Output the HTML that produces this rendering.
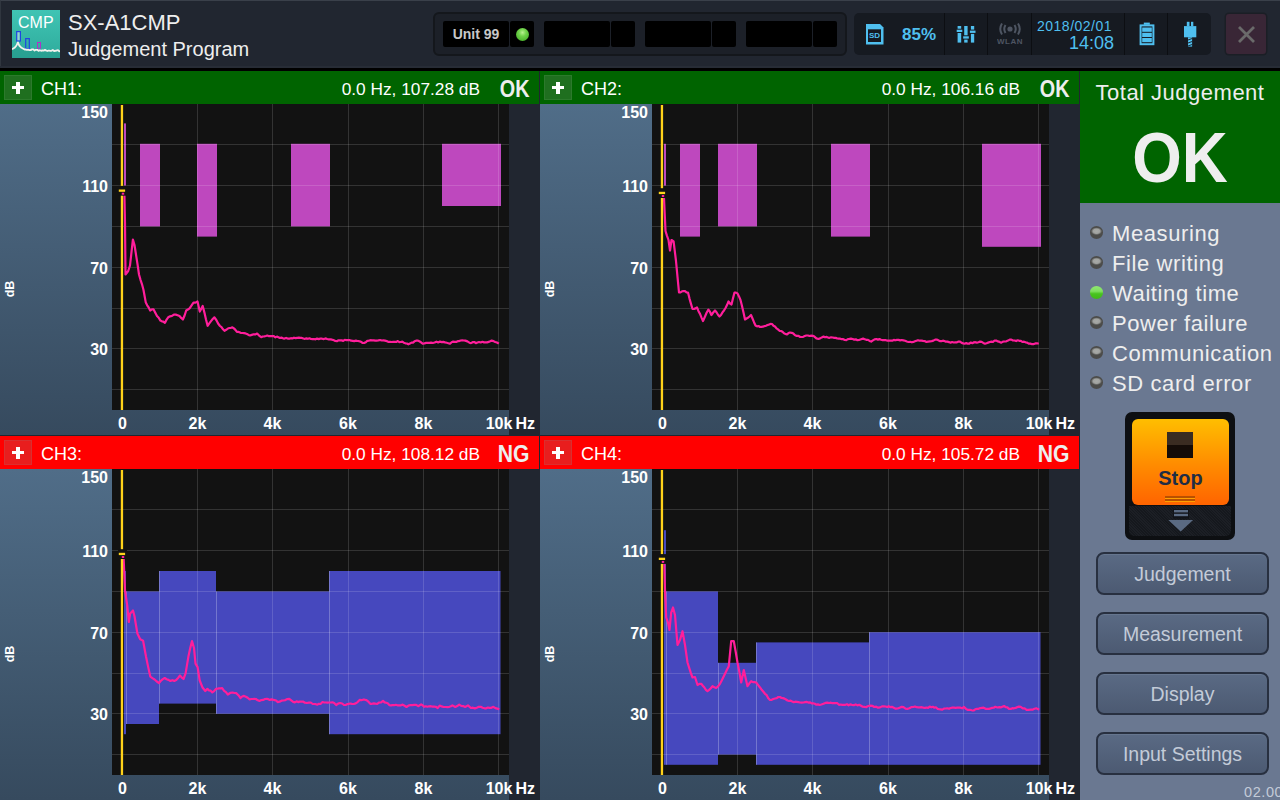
<!DOCTYPE html><html><head><meta charset="utf-8"><style>*{box-sizing:border-box;margin:0;padding:0}
html,body{width:1280px;height:800px;overflow:hidden}
body{background:#212630;position:relative;font-family:"Liberation Sans",sans-serif;color:#fff}
.abs{position:absolute}
#hdr{position:absolute;left:0;top:0;width:1280px;height:68px;background:#212630;border-top:1px solid #3a404a;border-left:1px solid #30363f}
#blk{position:absolute;left:0;top:68px;width:1280px;height:3px;background:#000}
#logo{position:absolute;left:12px;top:10px;width:48px;height:48px;background:linear-gradient(#40c4b4,#2eab9c);overflow:hidden}
#logo .t{position:absolute;left:6px;top:4px;font-size:16px;color:#fff;letter-spacing:0px}
#title1{position:absolute;left:68px;top:10px;font-size:22px;color:#eeeeee;white-space:nowrap}
#title2{position:absolute;left:68px;top:38px;font-size:20px;color:#eeeeee;white-space:nowrap}
.grp{position:absolute;top:12px;height:44px;background:#1c2028;border:2px solid #14171c;border-radius:6px}
.cell{position:absolute;top:21px;height:26px;background:#000;border-radius:2px}
#unit{font-weight:bold;font-size:14px;color:#c8c8c8;text-align:center;line-height:26px}
#led{position:absolute;left:516px;top:28px;width:13px;height:13px;border-radius:50%;background:radial-gradient(circle at 50% 35%,#b8f090 0%,#6fd24a 35%,#3ba51f 100%)}
.stat{position:absolute;top:13px;height:42px;background:#161a21;border-radius:5px}
.sep{position:absolute;top:13px;width:1px;height:42px;background:#0c0e12}
.blue{color:#4fbfef}
.panel{position:absolute;width:540px;height:365px;overflow:hidden}
.panel svg.plot{position:absolute;left:0;top:0}
.hline{position:absolute;left:0;top:364px;width:540px;height:1px;background:#212630}
.axisbg{position:absolute;left:0;top:33px;width:509px;height:331px;background:linear-gradient(#506d88,#364a5e)}
.rdark{position:absolute;left:509px;top:33px;width:30px;height:332px;background:#212630}
.vdiv{position:absolute;left:539px;top:0;width:1px;height:365px;background:#212630}
.hdr{position:absolute;left:0;top:0;width:539px;height:33px}
.plus{position:absolute;left:4px;top:4px;width:28px;height:25px;border:1px solid}
.plus:before{content:'';position:absolute;left:7px;top:9.5px;width:12px;height:3.2px;background:#fff}
.plus:after{content:'';position:absolute;left:11.4px;top:6.2px;width:3.2px;height:12px;background:#fff}
.chn{position:absolute;left:41px;top:8px;font-size:18px;color:#fff}
.val{position:absolute;right:59px;top:8px;font-size:17.3px;color:#fff;white-space:nowrap}
.res{position:absolute;right:10px;top:4.5px;font-size:23px;font-weight:bold;color:#eeeeee;transform:scaleX(0.86);transform-origin:100% 50%}
.yl{position:absolute;left:50px;width:58px;text-align:right;font-size:16px;font-weight:bold;color:#fff}
.db{position:absolute;left:0px;top:211px;width:20px;font-size:12.5px;line-height:14px;text-align:center;font-weight:bold;color:#fff;transform:rotate(-90deg)}
.xl{position:absolute;top:344px;width:60px;text-align:center;font-size:16px;font-weight:bold;color:#fff}
.hz{position:absolute;left:515.5px;top:344px;font-size:16px;font-weight:bold;color:#fff}
#rp{position:absolute;left:1080px;top:71px;width:200px;height:729px;background:#6a7891}
#rpline{position:absolute;left:1079px;top:71px;width:1px;height:729px;background:#212630}
#tj{position:absolute;left:1080px;top:71px;width:200px;height:132px;background:#006400}
#tj .a{position:absolute;left:0;width:200px;top:9px;text-align:center;font-size:22px;letter-spacing:0.5px;color:#eeeeee}
#tj .b{position:absolute;left:0;width:200px;top:47px;text-align:center;font-size:70px;font-weight:bold;color:#eeeeee;transform:scaleX(0.91)}
.st{position:absolute;left:1112px;font-size:22px;letter-spacing:0.6px;color:#eeeeee;white-space:nowrap}
.sled{position:absolute;left:1090px;width:13px;height:12.5px;border-radius:50%;background:radial-gradient(ellipse 5.5px 3.8px at 50% 40%,#a9aba8 0,#a0a29f 60%,#4c4c4a 100%)}
.sled.g{background:linear-gradient(#90e870 0%,#80e060 40%,#48c41e 60%,#40b818 100%)}
.btn{position:absolute;left:1096px;width:173px;height:43px;border:2px solid #283040;border-radius:8px;background:linear-gradient(#5a6a84,#4c5a72);box-shadow:inset 0 1px 0 #66768f;color:#c3cbd8;font-size:19.5px;text-align:center;line-height:41px}
#ver{position:absolute;left:1244px;top:783.5px;font-size:14.5px;letter-spacing:0.6px;color:#c3cbd8;white-space:nowrap}
</style></head><body><div id="hdr"></div>
<div id="blk"></div><div style="position:absolute;left:0;top:66px;width:1280px;height:2px;background:#272c36"></div>
<div id="logo"><svg width="48" height="48" style="position:absolute;left:0;top:0">
<path d="M0,40 L0.0,39.3 L2.5,37.8 L4.5,35.5 L5.9,32.4 L7.2,35.5 L9.5,37.8 L12.6,39.5 L13.5,39.4 L14.8,39.9 L16.1,39.7 L17.4,40.1 L18.7,40.1 L20.0,39.4 L21.3,39.4 L22.6,40.6 L23.9,39.8 L25.2,39.8 L26.5,40.9 L27.8,40.2 L29.1,40.8 L30.4,40.3 L31.7,40.6 L33.0,39.9 L34.3,40.6 L35.6,41.0 L36.9,40.5 L38.2,40.9 L39.5,40.8 L40.8,40.0 L42.1,41.0 L43.4,40.8 L44.7,40.5 L46.0,40.1 L47.3,41.3 L48.0,40.8 V48 H0 Z" fill="#24998a" opacity="0.6"/>
<rect x="4.7" y="21.6" width="3.7" height="9.4" fill="#8fd8cc" stroke="#1f45e0" stroke-width="1.2"/>
<rect x="13.7" y="28.6" width="3.6" height="10.3" fill="none" stroke="#1f45e0" stroke-width="1.2"/>
<rect x="25.5" y="32.5" width="3" height="5.8" fill="none" stroke="#b030c8" stroke-width="1"/>
<polyline points="0.0,39.3 2.5,37.8 4.5,35.5 5.9,32.4 7.2,35.5 9.5,37.8 12.6,39.5 13.5,39.4 14.8,39.9 16.1,39.7 17.4,40.1 18.7,40.1 20.0,39.4 21.3,39.4 22.6,40.6 23.9,39.8 25.2,39.8 26.5,40.9 27.8,40.2 29.1,40.8 30.4,40.3 31.7,40.6 33.0,39.9 34.3,40.6 35.6,41.0 36.9,40.5 38.2,40.9 39.5,40.8 40.8,40.0 42.1,41.0 43.4,40.8 44.7,40.5 46.0,40.1 47.3,41.3 48.0,40.8" fill="none" stroke="#f2f2ee" stroke-width="1.8" stroke-linejoin="round"/>
</svg><div class="t">CMP</div></div>
<div id="title1">SX-A1CMP</div>
<div id="title2">Judgement Program</div>

<div class="grp" style="left:433px;width:414px"></div>
<div class="cell" id="unit" style="left:443px;width:66px">Unit 99</div>
<div class="cell" style="left:510px;width:24px"></div>
<div id="led"></div>
<div class="cell" style="left:544px;width:66px"></div><div class="cell" style="left:611px;width:24px"></div>
<div class="cell" style="left:645px;width:66px"></div><div class="cell" style="left:712px;width:24px"></div>
<div class="cell" style="left:746px;width:66px"></div><div class="cell" style="left:813px;width:24px"></div>

<div class="stat" style="left:854px;width:357px"></div>
<div class="sep" style="left:944px"></div><div class="sep" style="left:987px"></div><div class="sep" style="left:1031px"></div><div class="sep" style="left:1124px"></div><div class="sep" style="left:1167px"></div>
<svg width="18" height="21" style="position:absolute;left:866px;top:24px"><path d="M0,0 H14 L17.5,3.5 V20.5 H0 Z" fill="#4fbfef"/><rect x="2" y="5.3" width="13" height="12.7" fill="#161a21"/><text x="8.6" y="14.4" font-family="Liberation Sans" font-weight="bold" font-size="8" fill="#4fbfef" text-anchor="middle">SD</text></svg>
<div class="blue" style="position:absolute;left:902px;top:25px;font-size:17px;font-weight:bold">85%</div>
<svg width="21" height="18" style="position:absolute;left:956px;top:25px"><g fill="#4fbfef"><rect x="1.6" y="1" width="3.6" height="2.7"/><rect x="0.7" y="4.7" width="5.6" height="2.3"/><rect x="1.6" y="8.0" width="3.6" height="9.6"/><rect x="8.2" y="1" width="3.4" height="9.3"/><rect x="7.2" y="11.3" width="5.6" height="2.3"/><rect x="8.2" y="14.6" width="3.4" height="3.0"/><rect x="14.9" y="1" width="3.3" height="3.6"/><rect x="13.9" y="5.6" width="5.6" height="2.3"/><rect x="14.9" y="8.9" width="3.3" height="8.7"/></g></svg>
<svg width="26" height="22" style="position:absolute;left:997px;top:23px"><circle cx="13" cy="6" r="2.6" fill="#4e5562"/><path d="M8.5,2 Q6,6 8.5,10 M17.5,2 Q20,6 17.5,10 M5,0.5 Q1.5,6 5,11.5 M21,0.5 Q24.5,6 21,11.5" stroke="#4e5562" stroke-width="2" fill="none"/><text x="13" y="21" font-family="Liberation Sans" font-weight="bold" font-size="8" fill="#4e5562" text-anchor="middle" letter-spacing="0.5">WLAN</text></svg>
<div class="blue" style="position:absolute;left:1037px;top:18px;font-size:14px;letter-spacing:0.5px">2018/02/01</div>
<div class="blue" style="position:absolute;left:1069px;top:33px;font-size:18px">14:08</div>
<svg width="16" height="24" style="position:absolute;left:1139px;top:22px"><rect x="4.8" y="0.6" width="6" height="2.2" fill="#4fbfef"/><rect x="1.6" y="3.4" width="12.8" height="18.8" fill="none" stroke="#4fbfef" stroke-width="2"/><rect x="3.2" y="5.5" width="9.6" height="4.3" fill="#4fbfef"/><rect x="3.2" y="10.8" width="9.6" height="4.2" fill="#4fbfef"/><rect x="3.2" y="16" width="9.6" height="4.2" fill="#4fbfef"/></svg>
<svg width="14" height="26" style="position:absolute;left:1183px;top:21px"><rect x="3.8" y="0.8" width="2.7" height="4.5" fill="#4fbfef"/><rect x="8" y="0.8" width="2.3" height="4.5" fill="#4fbfef"/><rect x="1" y="5.1" width="12.3" height="11.2" fill="#4fbfef"/><rect x="5" y="16.3" width="4.1" height="9.3" fill="#4fbfef"/><path d="M5,19 L9.1,17.5 M5,22 L9.1,20.5 M5,25 L9.1,23.5" stroke="#161a21" stroke-width="0.9"/></svg>
<div style="position:absolute;left:1226px;top:14px;width:40px;height:40px;background:#392636;border-radius:3px;box-shadow:0 0 0 1.5px #1b1e25"><svg width="40" height="40"><path d="M13,13 L28,28 M28,13 L13,28" stroke="#6a6a6a" stroke-width="2.8"/></svg></div>

<div class="panel" style="left:0px;top:71px"><div class="axisbg"></div><div class="rdark"></div><div class="vdiv"></div><div class="hline"></div><svg class="plot" width="540" height="365" viewBox="0 0 540 365"><rect x="112" y="33" width="397" height="306" fill="#121212"/><rect x="124.0" y="52.4" width="2.0" height="62.2" fill="#be48be" fill-opacity="1.00"/><rect x="140.0" y="72.8" width="20.0" height="82.6" fill="#be48be" fill-opacity="1.00"/><rect x="197.0" y="72.8" width="20.0" height="92.8" fill="#be48be" fill-opacity="1.00"/><rect x="291.0" y="72.8" width="39.0" height="82.6" fill="#be48be" fill-opacity="1.00"/><rect x="442.0" y="72.8" width="59.0" height="62.2" fill="#be48be" fill-opacity="1.00"/><path d="M112,318.5H509M112,277.5H509M112,237.5H509M112,196.5H509M112,155.5H509M112,114.5H509M112,73.5H509M197.5,33V339M272.5,33V339M348.5,33V339M423.5,33V339M498.5,33V339" stroke="#ffffff" stroke-opacity="0.14" stroke-width="1" fill="none"/><polyline points="124.4,122.5 125.0,151.8 125.5,203.5 128.2,200.0 130.0,194.5 132.9,168.6 134.5,174.0 136.0,183.6 137.5,193.2 139.0,203.5 140.5,208.8 142.0,213.3 143.5,219.0 145.8,231.6 147.2,234.3 148.8,236.7 150.2,239.5 151.9,238.4 153.6,238.4 155.3,241.7 157.0,245.0 158.7,246.7 160.4,249.6 161.9,250.3 163.4,250.6 164.9,251.9 166.6,248.6 168.2,246.3 170.1,245.3 172.0,244.9 173.9,243.6 175.8,243.6 177.6,244.2 179.5,245.0 181.2,246.9 182.9,248.5 184.6,244.5 186.2,239.5 187.9,238.5 189.6,237.3 191.6,234.3 193.5,231.6 195.5,231.6 197.5,230.5 199.8,240.6 202.7,235.0 204.3,241.1 206.0,248.6 207.6,254.8 209.3,252.4 211.0,250.1 212.7,248.0 214.4,246.3 216.3,249.0 218.1,252.5 220.0,255.0 221.5,256.2 223.0,258.3 224.5,259.8 226.2,258.8 227.9,257.5 229.4,257.0 230.9,256.8 232.4,256.4 233.9,257.4 235.4,258.9 236.9,260.9 238.8,260.9 240.6,261.8 242.5,262.0 244.0,262.2 245.5,262.4 247.0,263.0 248.5,263.9 250.0,264.5 251.8,263.9 253.6,263.3 255.3,263.4 257.1,262.5 259.1,264.6 261.2,266.2 262.7,265.5 264.2,265.4 265.8,265.0 267.3,264.5 269.0,265.2 270.6,265.2 272.3,265.2 273.8,265.2 275.4,266.4 276.9,265.6 278.4,266.3 279.9,267.0 281.4,266.6 283.0,267.3 284.5,267.6 286.1,266.9 287.7,267.6 289.3,267.6 290.9,267.2 292.4,267.5 294.0,266.7 295.6,267.1 297.2,266.8 298.8,266.6 300.3,266.9 301.9,266.9 303.4,267.5 304.9,267.8 306.4,267.4 307.9,267.8 309.5,267.3 311.0,268.0 312.5,268.1 314.0,268.0 315.5,268.3 317.0,267.6 318.7,268.1 320.4,267.5 322.1,267.7 323.8,268.1 325.5,267.4 327.2,268.0 328.8,268.4 330.4,268.4 332.1,268.7 333.7,269.1 335.3,270.0 336.9,270.2 338.5,269.3 340.0,269.4 341.6,269.4 343.2,269.9 344.8,268.8 346.3,269.2 347.9,269.2 349.5,269.0 351.1,269.7 352.7,269.8 354.3,270.1 355.9,269.6 357.5,270.0 359.1,270.2 360.7,270.6 362.7,272.0 364.2,271.9 365.8,271.3 367.3,269.8 368.8,269.6 370.4,269.2 372.0,269.3 373.7,269.3 375.3,269.6 376.9,269.7 378.5,269.3 380.1,269.0 381.8,269.5 383.4,269.4 385.0,269.6 386.7,270.1 388.5,270.9 390.2,270.8 391.7,271.0 393.2,270.8 394.7,270.9 396.2,270.9 397.8,270.1 399.3,271.1 400.8,271.0 402.3,270.6 403.8,271.7 405.4,272.3 406.9,272.5 408.4,273.3 409.9,272.6 411.5,271.6 413.0,271.6 414.5,270.3 416.1,269.7 417.6,269.6 419.3,270.3 421.0,271.3 422.7,272.7 424.4,272.4 426.1,271.9 427.8,271.8 429.4,271.8 431.1,271.6 432.8,272.0 434.6,271.5 436.4,270.7 438.2,271.4 440.0,270.6 441.7,271.1 443.3,270.9 445.0,271.4 446.7,271.8 448.3,272.2 450.0,272.7 451.6,271.2 453.1,270.6 454.6,270.9 456.2,270.9 457.7,270.2 459.2,270.1 460.7,269.5 462.2,269.4 463.8,269.5 465.3,269.6 467.4,270.4 469.4,271.7 471.0,272.1 472.6,271.2 474.3,271.0 475.9,272.1 477.5,271.5 479.1,271.0 480.7,271.5 482.4,270.8 484.0,271.4 485.6,271.3 487.1,271.4 488.6,270.9 490.2,270.3 491.7,269.6 493.5,270.1 495.2,271.0 497.0,271.5 498.8,272.7" fill="none" stroke="#ff1e9b" stroke-width="2.2" stroke-linejoin="round"/><rect x="120.8" y="34" width="2.3" height="305" fill="#ffd21a"/><rect x="118" y="114.9" width="9" height="9.8" fill="#121212"/><rect x="118.8" y="118.5" width="6.3" height="2.3" fill="#ffd21a"/><rect x="121.8" y="121.7" width="2.4" height="2" fill="#ff1e9b"/></svg><div class="hdr" style="background:#006400"><div class="plus" style="background:#1f6f1f;border-color:#2c7a2c"></div><div class="chn">CH1:</div><div class="val">0.0 Hz, 107.28 dB</div><div class="res">OK</div></div><div class="yl" style="top:33px">150</div><div class="yl" style="top:107px">110</div><div class="yl" style="top:189px">70</div><div class="yl" style="top:270px">30</div><div class="db">dB</div><div class="xl" style="left:92.5px">0</div><div class="xl" style="left:167.5px">2k</div><div class="xl" style="left:242.5px">4k</div><div class="xl" style="left:318.0px">6k</div><div class="xl" style="left:393.5px">8k</div><div class="xl" style="left:469.0px">10k</div><div class="hz">Hz</div></div><div class="panel" style="left:540px;top:71px"><div class="axisbg"></div><div class="rdark"></div><div class="vdiv"></div><div class="hline"></div><svg class="plot" width="540" height="365" viewBox="0 0 540 365"><rect x="112" y="33" width="397" height="306" fill="#121212"/><rect x="124.0" y="72.8" width="2.0" height="41.8" fill="#be48be" fill-opacity="1.00"/><rect x="140.0" y="72.8" width="20.0" height="92.8" fill="#be48be" fill-opacity="1.00"/><rect x="178.0" y="72.8" width="39.0" height="82.6" fill="#be48be" fill-opacity="1.00"/><rect x="291.0" y="72.8" width="39.0" height="92.8" fill="#be48be" fill-opacity="1.00"/><rect x="442.0" y="72.8" width="59.0" height="103.0" fill="#be48be" fill-opacity="1.00"/><path d="M112,318.5H509M112,277.5H509M112,237.5H509M112,196.5H509M112,155.5H509M112,114.5H509M112,73.5H509M197.5,33V339M272.5,33V339M348.5,33V339M423.5,33V339M498.5,33V339" stroke="#ffffff" stroke-opacity="0.14" stroke-width="1" fill="none"/><polyline points="124.0,127.0 125.5,160.0 127.0,164.8 128.5,169.0 130.0,179.5 131.5,169.0 133.6,170.5 136.0,190.0 137.5,205.8 139.0,221.5 140.5,221.3 142.0,220.3 143.5,220.0 145.0,220.2 146.5,221.4 148.0,221.5 149.5,227.6 151.0,232.9 152.5,238.0 154.0,237.9 155.5,237.4 157.0,236.5 158.5,240.2 160.0,242.9 161.5,246.6 163.0,250.0 164.8,246.0 166.6,241.8 168.4,238.6 169.9,240.7 171.4,244.0 173.2,241.5 175.0,239.5 176.5,241.2 178.0,243.7 179.5,245.5 181.0,244.0 182.5,241.4 184.0,239.5 185.5,237.0 187.0,234.1 188.5,230.5 190.0,232.5 191.5,233.5 193.0,227.3 194.5,221.5 196.0,221.6 197.5,222.4 199.0,225.4 200.5,229.0 202.0,235.1 203.5,241.6 205.0,248.5 206.5,247.5 208.0,246.7 209.5,245.5 211.0,244.0 212.5,247.5 214.0,251.2 215.5,254.5 217.0,255.4 218.5,255.0 220.0,256.0 221.5,255.8 223.0,255.7 224.5,255.1 226.0,254.7 227.5,254.0 229.0,253.6 230.5,252.9 232.0,253.0 233.5,254.7 235.0,255.5 236.5,257.4 238.0,258.4 239.5,259.8 241.0,260.0 242.5,260.8 244.0,262.3 245.5,262.9 247.0,263.5 248.5,262.1 250.0,261.5 251.7,261.8 253.4,262.6 255.1,264.2 256.8,264.9 258.5,264.8 260.2,266.0 261.7,266.0 263.2,265.8 264.8,265.1 266.3,264.5 267.9,264.5 269.5,265.0 271.2,264.7 272.8,264.8 274.4,265.6 276.4,267.4 278.4,268.0 280.1,267.4 281.8,266.4 283.5,265.6 285.0,266.3 286.6,265.9 288.1,266.6 289.6,266.8 291.1,266.3 292.7,266.5 294.2,266.8 295.7,266.9 297.3,267.5 298.8,267.6 300.3,267.7 301.8,268.2 303.3,268.2 304.8,269.0 306.3,269.1 307.9,268.1 309.4,267.9 311.0,267.6 312.6,268.0 314.2,268.6 315.8,268.3 317.4,269.2 319.0,269.0 321.1,268.3 323.1,267.6 324.7,268.2 326.3,268.8 328.0,268.8 329.6,269.9 331.2,270.6 332.9,269.4 334.6,268.3 336.3,268.0 337.9,268.6 339.5,268.1 341.1,268.7 342.7,269.2 344.3,269.2 345.9,269.2 347.5,269.6 349.1,269.6 350.7,269.5 352.2,269.7 353.8,268.9 355.4,269.3 357.0,268.9 358.5,268.9 360.1,269.4 361.7,269.0 363.4,269.4 365.1,269.8 366.8,270.5 368.5,271.0 370.2,270.8 371.9,271.3 373.4,270.9 374.9,270.3 376.5,269.7 378.0,269.2 379.7,269.7 381.4,269.6 383.1,269.9 384.7,270.1 386.4,270.9 388.1,270.6 389.9,270.3 391.7,270.1 393.4,269.6 395.2,268.6 396.7,268.6 398.3,269.3 399.8,270.1 401.3,270.2 402.9,269.7 404.4,270.0 405.9,270.7 407.4,270.6 409.0,271.1 410.5,271.7 412.1,271.0 413.7,271.5 415.4,271.4 417.0,271.3 418.6,270.6 420.1,270.7 421.7,271.9 423.2,272.4 424.7,272.7 426.2,272.1 427.8,272.7 429.3,272.6 430.8,271.5 432.4,272.2 433.9,271.3 435.4,271.2 436.9,271.6 438.5,271.2 440.0,270.6 441.7,270.9 443.3,271.9 445.0,272.7 446.6,272.3 448.2,271.6 449.8,271.0 451.4,270.7 453.0,270.8 454.6,269.5 456.2,269.6 457.9,270.4 459.6,270.9 461.3,271.7 463.0,270.6 464.7,270.5 466.3,270.3 468.0,269.6 469.7,268.6 471.4,268.6 473.0,269.5 474.6,269.5 476.1,270.1 477.7,269.3 479.3,269.8 480.9,269.8 482.4,271.0 484.0,270.7 485.6,271.3 487.1,271.6 488.7,272.7 490.4,272.6 492.1,273.2 493.8,273.1 495.4,272.4 497.1,272.3 498.8,272.7" fill="none" stroke="#ff1e9b" stroke-width="2.2" stroke-linejoin="round"/><rect x="120.8" y="34" width="2.3" height="305" fill="#ffd21a"/><rect x="118" y="117.2" width="9" height="9.8" fill="#121212"/><rect x="118.8" y="120.8" width="6.3" height="2.3" fill="#ffd21a"/><rect x="121.8" y="124.0" width="2.4" height="2" fill="#ff1e9b"/></svg><div class="hdr" style="background:#006400"><div class="plus" style="background:#1f6f1f;border-color:#2c7a2c"></div><div class="chn">CH2:</div><div class="val">0.0 Hz, 106.16 dB</div><div class="res">OK</div></div><div class="yl" style="top:33px">150</div><div class="yl" style="top:107px">110</div><div class="yl" style="top:189px">70</div><div class="yl" style="top:270px">30</div><div class="db">dB</div><div class="xl" style="left:92.5px">0</div><div class="xl" style="left:167.5px">2k</div><div class="xl" style="left:242.5px">4k</div><div class="xl" style="left:318.0px">6k</div><div class="xl" style="left:393.5px">8k</div><div class="xl" style="left:469.0px">10k</div><div class="hz">Hz</div></div><div class="panel" style="left:0px;top:436px"><div class="axisbg"></div><div class="rdark"></div><div class="vdiv"></div><div class="hline"></div><svg class="plot" width="540" height="365" viewBox="0 0 540 365"><rect x="112" y="33" width="397" height="306" fill="#121212"/><rect x="124.0" y="135.0" width="2.0" height="163.2" fill="#4648be" fill-opacity="1.00"/><rect x="126.0" y="155.4" width="33.0" height="132.6" fill="#4648be" fill-opacity="1.00"/><rect x="159.0" y="135.0" width="57.0" height="132.6" fill="#4648be" fill-opacity="1.00"/><rect x="216.0" y="155.4" width="113.0" height="122.4" fill="#4648be" fill-opacity="1.00"/><rect x="329.0" y="135.0" width="171.5" height="163.2" fill="#4648be" fill-opacity="1.00"/><line x1="126.5" x2="126.5" y1="155.4" y2="288.0" stroke="#ffffff" stroke-opacity="0.25" stroke-width="1"/><line x1="159.5" x2="159.5" y1="135.0" y2="267.6" stroke="#ffffff" stroke-opacity="0.25" stroke-width="1"/><line x1="216.5" x2="216.5" y1="155.4" y2="277.8" stroke="#ffffff" stroke-opacity="0.25" stroke-width="1"/><line x1="329.5" x2="329.5" y1="135.0" y2="298.2" stroke="#ffffff" stroke-opacity="0.25" stroke-width="1"/><path d="M112,318.5H509M112,277.5H509M112,237.5H509M112,196.5H509M112,155.5H509M112,114.5H509M112,73.5H509M197.5,33V339M272.5,33V339M348.5,33V339M423.5,33V339M498.5,33V339" stroke="#ffffff" stroke-opacity="0.14" stroke-width="1" fill="none"/><polyline points="123.6,121.3 125.0,154.4 127.3,170.0 128.8,186.0 130.2,177.4 133.0,174.5 134.5,180.3 137.4,197.5 140.2,203.3 143.1,204.7 146.0,220.5 148.2,231.1 150.3,240.6 152.4,242.1 154.6,243.5 156.8,245.5 159.0,247.0 160.9,244.8 162.8,243.1 164.7,242.0 166.6,243.2 168.5,243.9 170.4,245.0 172.3,244.2 174.3,244.9 176.2,244.0 178.1,241.9 180.0,239.5 181.8,241.6 183.5,243.0 185.6,237.4 188.4,220.6 190.2,212.3 192.0,205.0 194.0,212.0 195.5,227.6 197.6,231.1 199.7,244.5 202.5,251.5 205.3,255.0 207.4,252.9 209.0,254.5 210.7,254.7 212.3,256.4 214.1,255.1 215.9,252.9 217.5,252.7 219.1,252.4 220.6,252.4 222.2,252.2 224.1,254.8 225.9,256.1 227.8,258.5 230.6,256.8 232.5,256.5 234.4,257.0 236.2,257.1 238.4,259.2 240.5,262.0 242.2,260.5 244.0,259.9 245.9,260.7 247.7,261.8 249.6,263.5 251.2,263.0 252.8,263.0 254.3,262.9 255.9,263.0 257.7,264.3 259.5,264.9 261.3,264.1 263.1,263.9 265.0,263.0 266.8,262.9 268.3,263.2 269.8,263.9 271.4,263.4 273.0,263.7 274.6,264.1 276.1,264.5 277.6,266.1 279.6,265.7 281.5,264.7 283.4,264.5 285.4,264.1 287.4,263.1 289.3,262.8 291.2,264.3 293.2,265.9 294.8,266.4 296.5,265.3 298.1,266.1 299.7,265.6 301.4,265.6 303.0,265.5 304.9,266.7 306.9,267.0 308.9,266.6 310.8,266.5 312.7,268.0 314.3,268.0 315.8,268.2 317.4,268.6 318.9,267.8 320.5,268.0 322.5,266.0 324.2,266.5 325.8,266.5 327.5,266.6 329.2,266.5 330.9,266.5 332.5,266.3 334.2,267.0 336.2,269.0 338.1,267.6 340.1,267.0 342.1,267.5 344.0,269.0 345.6,269.0 347.1,268.2 348.7,267.9 350.2,267.5 351.8,267.8 353.8,268.0 355.7,267.4 357.6,266.1 359.6,263.9 361.3,264.2 363.0,263.7 364.7,263.7 366.4,264.1 368.4,265.7 370.3,267.8 372.0,267.8 373.8,267.4 375.5,267.7 377.2,267.8 379.1,266.5 381.1,266.4 383.0,264.9 384.6,266.4 386.2,266.8 387.7,267.3 389.3,269.1 390.9,269.4 392.5,269.2 394.1,269.2 395.8,268.8 397.4,269.3 399.0,269.4 400.6,269.4 402.6,268.6 404.6,269.8 406.5,271.0 408.4,269.6 410.4,269.0 412.3,269.1 414.3,268.8 416.2,268.9 418.2,270.2 421.1,268.4 422.6,269.3 424.1,270.8 425.8,270.3 427.4,270.7 429.1,270.3 430.8,270.2 432.5,270.6 434.1,270.5 435.8,270.8 437.7,272.0 439.7,269.6 441.6,270.4 443.6,271.0 445.5,271.0 447.5,271.2 449.4,270.8 450.9,270.3 452.4,269.4 455.3,271.0 457.2,270.1 459.2,268.6 461.2,269.9 463.1,270.1 465.1,271.0 468.0,269.4 470.9,272.0 472.9,271.7 474.8,272.4 476.8,271.7 478.8,270.8 480.7,270.8 482.6,271.8 484.6,272.3 486.2,272.3 487.9,271.5 489.5,271.9 491.4,271.8 493.4,270.8 495.4,272.1 497.3,272.6 499.3,273.3" fill="none" stroke="#ff1e9b" stroke-width="2.2" stroke-linejoin="round"/><rect x="120.8" y="34" width="2.3" height="305" fill="#ffd21a"/><rect x="118" y="113.2" width="9" height="9.8" fill="#121212"/><rect x="118.8" y="116.8" width="6.3" height="2.3" fill="#ffd21a"/><rect x="121.8" y="120.0" width="2.4" height="2" fill="#ff1e9b"/></svg><div class="hdr" style="background:#ff0000"><div class="plus" style="background:#e81e1e;border-color:#d83030"></div><div class="chn">CH3:</div><div class="val">0.0 Hz, 108.12 dB</div><div class="res" style="transform:scaleX(0.92)">NG</div></div><div class="yl" style="top:33px">150</div><div class="yl" style="top:107px">110</div><div class="yl" style="top:189px">70</div><div class="yl" style="top:270px">30</div><div class="db">dB</div><div class="xl" style="left:92.5px">0</div><div class="xl" style="left:167.5px">2k</div><div class="xl" style="left:242.5px">4k</div><div class="xl" style="left:318.0px">6k</div><div class="xl" style="left:393.5px">8k</div><div class="xl" style="left:469.0px">10k</div><div class="hz">Hz</div></div><div class="panel" style="left:540px;top:436px"><div class="axisbg"></div><div class="rdark"></div><div class="vdiv"></div><div class="hline"></div><svg class="plot" width="540" height="365" viewBox="0 0 540 365"><rect x="112" y="33" width="397" height="306" fill="#121212"/><rect x="124.0" y="94.2" width="2.0" height="234.6" fill="#4648be" fill-opacity="1.00"/><rect x="126.0" y="155.4" width="52.0" height="173.4" fill="#4648be" fill-opacity="1.00"/><rect x="178.0" y="226.8" width="38.0" height="91.8" fill="#4648be" fill-opacity="1.00"/><rect x="216.0" y="206.4" width="113.0" height="122.4" fill="#4648be" fill-opacity="1.00"/><rect x="329.0" y="196.2" width="171.5" height="132.6" fill="#4648be" fill-opacity="1.00"/><line x1="126.5" x2="126.5" y1="155.4" y2="328.8" stroke="#ffffff" stroke-opacity="0.25" stroke-width="1"/><line x1="178.5" x2="178.5" y1="226.8" y2="318.6" stroke="#ffffff" stroke-opacity="0.25" stroke-width="1"/><line x1="216.5" x2="216.5" y1="206.4" y2="328.8" stroke="#ffffff" stroke-opacity="0.25" stroke-width="1"/><line x1="329.5" x2="329.5" y1="196.2" y2="328.8" stroke="#ffffff" stroke-opacity="0.25" stroke-width="1"/><path d="M112,318.5H509M112,277.5H509M112,237.5H509M112,196.5H509M112,155.5H509M112,114.5H509M112,73.5H509M197.5,33V339M272.5,33V339M348.5,33V339M423.5,33V339M498.5,33V339" stroke="#ffffff" stroke-opacity="0.14" stroke-width="1" fill="none"/><polyline points="124.2,124.0 125.0,154.0 126.2,181.5 128.0,186.5 129.5,194.0 131.2,176.5 133.0,171.5 135.0,179.0 137.5,209.0 140.0,204.0 142.5,195.2 145.0,209.0 147.5,226.5 149.2,231.8 150.8,236.9 152.5,241.5 155.0,241.0 157.5,249.0 159.4,247.9 161.2,247.8 162.8,249.7 164.4,251.5 165.9,253.8 167.5,255.2 169.2,253.9 170.8,252.3 172.5,250.2 174.4,251.2 176.2,252.0 178.1,250.3 180.0,247.8 181.7,244.6 183.3,241.3 185.0,237.8 186.9,233.7 188.8,230.2 191.2,205.2 193.8,205.2 195.6,215.3 197.5,226.5 199.4,236.1 201.2,246.5 203.8,234.0 205.6,242.0 207.5,250.2 209.4,247.3 211.2,245.2 212.9,246.1 214.6,246.2 216.2,246.5 218.0,248.9 219.8,251.2 221.5,253.5 223.2,255.5 225.0,257.8 226.7,259.2 228.3,262.3 230.0,264.0 231.7,263.8 233.3,263.0 235.0,262.5 236.7,262.2 238.3,261.0 240.0,261.0 241.5,262.0 243.0,262.1 244.5,262.6 246.0,263.5 247.5,264.5 249.1,265.0 250.6,264.6 252.2,265.5 253.8,266.1 255.3,265.7 256.9,265.9 258.4,266.2 260.0,266.5 261.7,266.6 263.4,266.5 265.1,266.2 266.8,265.9 268.4,266.6 270.1,266.4 271.7,267.4 273.3,267.3 274.8,267.7 276.4,268.7 277.9,268.4 279.5,269.0 281.4,268.5 283.4,267.8 285.4,266.9 287.3,266.7 289.3,267.0 290.9,266.7 292.4,267.2 294.0,267.2 295.5,267.2 297.1,267.0 299.0,268.8 300.6,268.5 302.2,268.8 303.8,268.8 305.4,268.8 307.0,268.3 308.6,269.3 310.2,268.4 311.8,268.8 313.8,269.2 315.7,268.4 317.5,269.4 319.2,268.8 321.0,269.8 322.7,270.7 324.5,270.8 326.1,271.2 327.6,270.3 329.2,269.9 330.7,269.7 332.3,269.8 334.2,271.0 336.2,270.7 338.1,271.7 340.1,271.4 342.0,270.4 344.0,270.4 345.6,270.5 347.1,271.1 348.7,270.2 350.2,271.1 351.8,270.8 353.8,271.8 355.7,272.7 357.7,272.5 359.6,271.7 361.6,270.8 363.5,271.2 365.5,272.7 367.4,272.9 369.4,272.3 371.3,271.1 373.3,271.0 375.0,270.5 376.6,271.2 378.3,271.3 380.0,271.3 381.7,271.2 383.3,271.6 385.0,271.9 386.6,271.5 388.1,271.9 389.7,270.6 391.2,271.3 392.8,270.8 394.4,271.7 395.9,271.3 397.5,272.8 399.0,273.1 400.6,273.3 402.3,273.6 403.9,272.6 405.6,272.5 407.3,272.3 409.0,272.8 410.6,272.0 412.3,271.7 413.9,271.6 415.6,271.8 417.2,271.7 418.8,271.6 420.5,271.7 422.1,272.3 424.0,271.0 426.0,272.9 428.0,273.9 429.9,273.8 431.9,274.3 433.6,274.5 435.2,273.3 436.9,272.9 438.6,272.8 440.3,272.1 441.9,271.9 443.6,271.7 445.6,272.8 447.5,272.9 449.1,272.9 450.6,272.4 452.2,271.8 453.7,271.7 455.3,270.8 457.3,271.5 459.2,271.2 461.2,271.3 464.1,270.0 465.7,271.2 467.4,271.4 469.0,272.9 470.7,272.9 472.3,272.2 474.0,272.3 475.7,271.9 477.4,271.1 479.0,270.6 480.7,270.8 482.7,272.3 484.6,272.4 486.6,273.9 488.5,273.8 490.5,273.6 492.4,273.7 494.4,272.8 496.3,272.3 497.8,273.1 499.3,273.3" fill="none" stroke="#ff1e9b" stroke-width="2.2" stroke-linejoin="round"/><rect x="120.8" y="34" width="2.3" height="305" fill="#ffd21a"/><rect x="118" y="118.1" width="9" height="9.8" fill="#121212"/><rect x="118.8" y="121.7" width="6.3" height="2.3" fill="#ffd21a"/><rect x="121.8" y="124.9" width="2.4" height="2" fill="#ff1e9b"/></svg><div class="hdr" style="background:#ff0000"><div class="plus" style="background:#e81e1e;border-color:#d83030"></div><div class="chn">CH4:</div><div class="val">0.0 Hz, 105.72 dB</div><div class="res" style="transform:scaleX(0.92)">NG</div></div><div class="yl" style="top:33px">150</div><div class="yl" style="top:107px">110</div><div class="yl" style="top:189px">70</div><div class="yl" style="top:270px">30</div><div class="db">dB</div><div class="xl" style="left:92.5px">0</div><div class="xl" style="left:167.5px">2k</div><div class="xl" style="left:242.5px">4k</div><div class="xl" style="left:318.0px">6k</div><div class="xl" style="left:393.5px">8k</div><div class="xl" style="left:469.0px">10k</div><div class="hz">Hz</div></div>

<div id="rpline"></div>
<div id="rp"></div>
<div id="tj"><div class="a">Total Judgement</div><div class="b">OK</div></div>
<div class="sled" style="top:226.3px"></div><div class="st" style="top:221px">Measuring</div>
<div class="sled" style="top:256px"></div><div class="st" style="top:251px">File writing</div>
<div class="sled g" style="top:286.3px"></div><div class="st" style="top:281px">Waiting time</div>
<div class="sled" style="top:316px"></div><div class="st" style="top:311px">Power failure</div>
<div class="sled" style="top:346px"></div><div class="st" style="top:341px">Communication</div>
<div class="sled" style="top:376px"></div><div class="st" style="top:371px">SD card error</div>

<div style="position:absolute;left:1125px;top:412px;width:110px;height:128px;background:#0d0f12;border-radius:7px"></div>
<div style="position:absolute;left:1129px;top:506px;width:102px;height:30px;background:repeating-linear-gradient(45deg,#15181d 0 1px,#1c1f25 1px 2px);border-radius:0 0 5px 5px"></div>
<div style="position:absolute;left:1132px;top:419px;width:97px;height:86px;border-radius:6px;background:linear-gradient(#ffbe00,#ff8a00 55%,#ff6400)"></div>
<div style="position:absolute;left:1167px;top:432px;width:26px;height:26px;background:linear-gradient(#3a2c22 50%,#140c08 50%)"></div>
<div style="position:absolute;left:1132px;top:467px;width:97px;text-align:center;font-size:20px;font-weight:bold;color:#1f2d45">Stop</div>
<div style="position:absolute;left:1165px;top:496px;width:30px;height:6px;background:linear-gradient(#b85000 0 33%,#ffa000 33% 50%,#b85000 50% 83%,#ffa000 83%)"></div>
<svg width="28" height="24" style="position:absolute;left:1167px;top:508px"><rect x="6" y="1" width="16" height="9.5" fill="#111318"/><rect x="7" y="2" width="14" height="2.4" fill="#5a6a82"/><rect x="7" y="5.8" width="14" height="2.4" fill="#5a6a82"/><path d="M1.3,12 H26.1 L13.7,23.6 Z" fill="#5a6a82"/></svg>

<div class="btn" style="top:552px">Judgement</div>
<div class="btn" style="top:612px">Measurement</div>
<div class="btn" style="top:672px">Display</div>
<div class="btn" style="top:732px">Input Settings</div>
<div id="ver">02.00</div>
</body></html>
